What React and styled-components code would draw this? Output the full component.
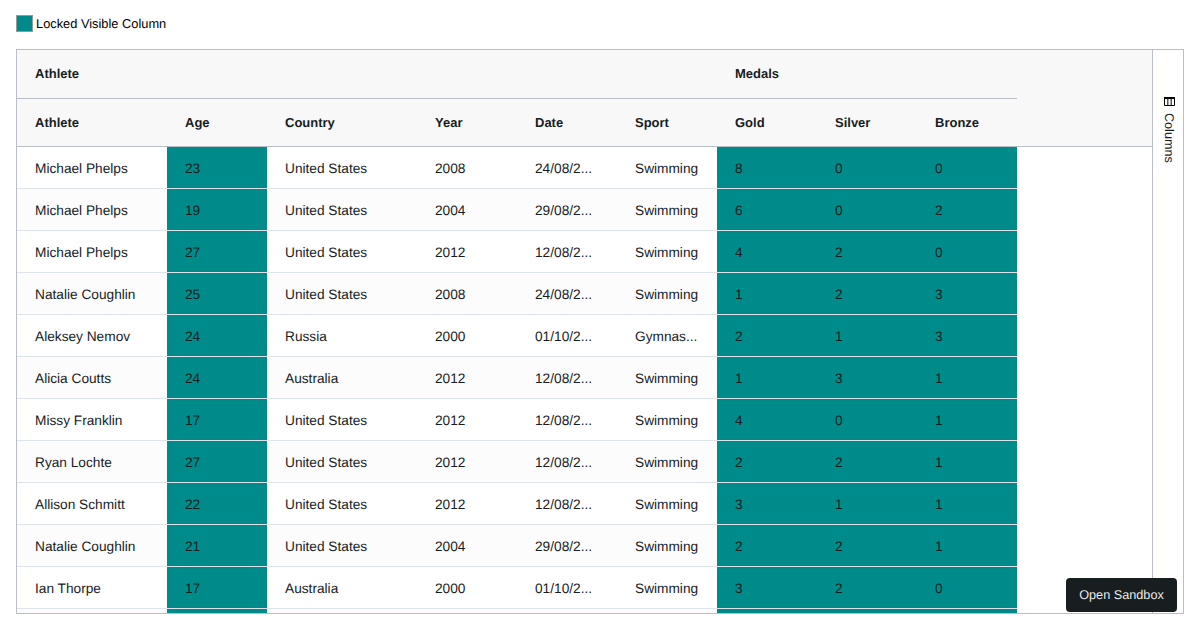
import styled, { createGlobalStyle } from "styled-components";

const GlobalStyle = createGlobalStyle`
  html, body {
    margin: 0;
    height: 100%;
    overflow: hidden;
    background: #fff;
  }
  #root {
    height: 100%;
  }
`;

const Page = styled.div`
  box-sizing: border-box;
  height: 630px;
  padding: 16px 16px 16px;
  display: flex;
  flex-direction: column;
  font-family: "Liberation Sans", Arial, sans-serif;
  text-rendering: geometricPrecision;
  color: #181d1f;
`;

const Legend = styled.div`
  display: flex;
  align-items: center;
  gap: 3px;
  height: 15px;
  margin-bottom: 18px;
  font-size: 12.83px;
  color: #000;
`;

const Swatch = styled.span`
  box-sizing: border-box;
  flex-shrink: 0;
  width: 17px;
  height: 17px;
  background: darkcyan;
  border: 1px solid #999;
`;

const Grid = styled.div`
  flex: 1;
  min-height: 0;
  display: flex;
  border: 1px solid #babfc7;
  overflow: hidden;
`;

const Main = styled.div`
  flex: 1;
  min-width: 0;
  display: flex;
  flex-direction: column;
`;

const Header = styled.div`
  background: #f8f8f8;
  border-bottom: 1px solid #babfc7;
`;

const HeaderRow = styled.div`
  display: grid;
  grid-template-columns: ${(p) => p.$columns};
  width: 1000px;
  height: ${(p) => p.$height}px;
  border-bottom: ${(p) => (p.$line ? "1px solid #babfc7" : "none")};
`;

const HeaderCell = styled.div`
  display: flex;
  align-items: center;
  padding: 0 18px ${(p) => (p.$group ? "2px" : "0")};
  font-size: 13px;
  font-weight: 700;
`;

const Body = styled.div`
  flex: 1;
  min-height: 0;
  overflow: hidden;
`;

const Row = styled.div`
  display: grid;
  grid-template-columns: 150px 100px 150px 100px 100px 100px 100px 100px 100px;
  width: 1000px;
  height: 41px;
  border-bottom: 1px solid #dde2eb;
  background: ${(p) => (p.$odd ? "#fcfcfc" : "#fff")};
`;

const Cell = styled.div`
  padding: 0 18px;
  line-height: 43px;
  height: 41px;
  font-size: 13.7px;
  white-space: nowrap;
  overflow: hidden;
  background: ${(p) => (p.$locked ? "darkcyan" : "transparent")};
`;

const SidePanel = styled.div`
  box-sizing: border-box;
  width: 31px;
  flex-shrink: 0;
  border-left: 1px solid #babfc7;
  display: flex;
  justify-content: center;
  padding-left: 2px;
`;

const PanelTab = styled.div`
  writing-mode: vertical-lr;
  display: flex;
  align-items: center;
  gap: 7px;
  height: max-content;
  padding-top: 47px;
  font-size: 12.6px;
`;

const ColumnsIcon = styled.svg`
  width: 11px;
  height: 9px;
  display: block;
`;

const SandboxButton = styled.div`
  position: fixed;
  right: 23px;
  bottom: 18px;
  width: 111px;
  height: 34px;
  display: flex;
  align-items: center;
  justify-content: center;
  border-radius: 4px;
  background: #181d1f;
  color: #e8eaeb;
  font-size: 12.7px;
`;

const rows = [
  ["Michael Phelps", 23, "United States", 2008, "24/08/2...", "Swimming", 8, 0, 0],
  ["Michael Phelps", 19, "United States", 2004, "29/08/2...", "Swimming", 6, 0, 2],
  ["Michael Phelps", 27, "United States", 2012, "12/08/2...", "Swimming", 4, 2, 0],
  ["Natalie Coughlin", 25, "United States", 2008, "24/08/2...", "Swimming", 1, 2, 3],
  ["Aleksey Nemov", 24, "Russia", 2000, "01/10/2...", "Gymnas...", 2, 1, 3],
  ["Alicia Coutts", 24, "Australia", 2012, "12/08/2...", "Swimming", 1, 3, 1],
  ["Missy Franklin", 17, "United States", 2012, "12/08/2...", "Swimming", 4, 0, 1],
  ["Ryan Lochte", 27, "United States", 2012, "12/08/2...", "Swimming", 2, 2, 1],
  ["Allison Schmitt", 22, "United States", 2012, "12/08/2...", "Swimming", 3, 1, 1],
  ["Natalie Coughlin", 21, "United States", 2004, "29/08/2...", "Swimming", 2, 2, 1],
  ["Ian Thorpe", 17, "Australia", 2000, "01/10/2...", "Swimming", 3, 2, 0],
  // only the top edge of this row shows above the grid's bottom border
  ["", "", "", "", "", "", "", "", ""],
];

const columns = ["Athlete", "Age", "Country", "Year", "Date", "Sport", "Gold", "Silver", "Bronze"];
const lockedColumns = [1, 6, 7, 8];

export default function App() {
  return (
    <Page>
      <GlobalStyle />
      <Legend>
        <Swatch />
        Locked Visible Column
      </Legend>
      <Grid>
        <Main>
          <Header>
            <HeaderRow $columns="700px 300px" $height={48} $line>
              <HeaderCell $group>Athlete</HeaderCell>
              <HeaderCell $group>Medals</HeaderCell>
            </HeaderRow>
            <HeaderRow $columns="150px 100px 150px 100px 100px 100px 100px 100px 100px" $height={47}>
              {columns.map((name) => (
                <HeaderCell key={name}>{name}</HeaderCell>
              ))}
            </HeaderRow>
          </Header>
          <Body>
            {rows.map((row, i) => (
              <Row key={i} $odd={i % 2 === 1}>
                {row.map((value, j) => (
                  <Cell key={j} $locked={lockedColumns.includes(j)}>
                    {value}
                  </Cell>
                ))}
              </Row>
            ))}
          </Body>
        </Main>
        <SidePanel>
          <PanelTab>
            <ColumnsIcon viewBox="0 0 11 9">
              <path d="M0 0h11v2H0z" fill="#000" />
              <path d="M.5 1v7.5h10V1M3.83 1v7.5M7.17 1v7.5" fill="none" stroke="#000" />
            </ColumnsIcon>
            Columns
          </PanelTab>
        </SidePanel>
      </Grid>
      <SandboxButton>Open Sandbox</SandboxButton>
    </Page>
  );
}
